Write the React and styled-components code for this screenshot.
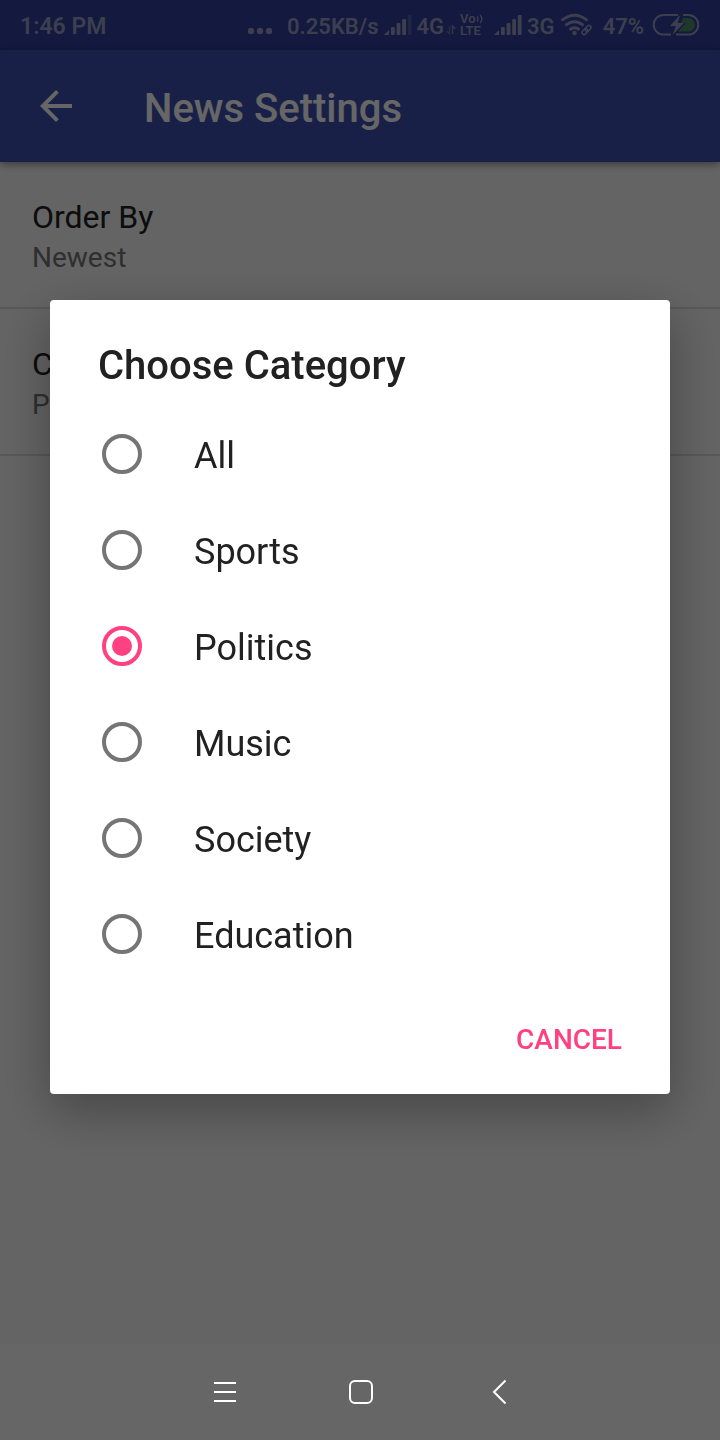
import React, { useState } from "react";
import styled, { createGlobalStyle } from "styled-components";

const GlobalStyle = createGlobalStyle`
  *, *::before, *::after { box-sizing: border-box; }
  body {
    margin: 0;
    background: #fafafa;
    font-family: Roboto, "Liberation Sans", sans-serif;
    color: #212121;
  }
  button, input { font: inherit; margin: 0; }
`;

const Screen = styled.div`
  display: flex;
  flex-direction: column;
  min-height: 100vh;
`;

const StatusBar = styled.div`
  display: flex;
  align-items: center;
  justify-content: space-between;
  height: 50px;
  padding: 0 20px;
  background: #303f9f;
  color: #989dc4;
  font-size: 22px;
  line-height: 28px;
  font-weight: 600;
  white-space: nowrap;

  svg { display: block; flex: none; }
`;

const StatusText = styled.span`
  padding-top: 3px;
`;

const Clock = styled(StatusText)`
  font-size: 23px;
`;

const StatusGroup = styled.div`
  display: flex;
  align-items: center;
  gap: ${(p) => p.$gap}px;
`;

const VolteBadge = styled.span`
  display: flex;
  flex-direction: column;
  align-items: flex-start;
  width: 24px;
  font-size: 13px;
  line-height: 12px;
`;

const VolteTop = styled.span`
  display: flex;
  align-items: center;
`;

const Toolbar = styled.header`
  display: flex;
  align-items: center;
  gap: 56px;
  height: 112px;
  padding: 0 24px;
  background: #3f51b5;
  color: #fff;
  box-shadow: 0 2px 8px rgba(0, 0, 0, 0.45);
`;

const IconButton = styled.button`
  display: flex;
  align-items: center;
  justify-content: center;
  width: 64px;
  height: 64px;
  padding: 0;
  border: 0;
  background: none;
  color: inherit;
  cursor: pointer;
`;

const ToolbarTitle = styled.h1`
  margin: 0;
  padding-top: 6px;
  font-size: 40px;
  line-height: 48px;
  font-weight: 500;
`;

const PreferenceList = styled.main`
  flex: 1;
`;

const Preference = styled.button`
  display: block;
  width: 100%;
  padding: 36px 32px 33px;
  border: 0;
  border-bottom: 2px solid #dadada;
  background: none;
  text-align: left;
  color: #212121;
  cursor: pointer;
`;

const PreferenceTitle = styled.span`
  display: block;
  font-size: 32px;
  line-height: 38px;
`;

const PreferenceSummary = styled.span`
  display: block;
  padding-top: 5px;
  font-size: 28px;
  line-height: 33px;
  color: #757575;
`;

const Scrim = styled.div`
  position: fixed;
  inset: 0;
  display: flex;
  align-items: center;
  justify-content: center;
  padding: 50px 50px 96px;
  background: rgba(0, 0, 0, 0.6);
`;

const Dialog = styled.form`
  width: 100%;
  max-width: 960px;
  border-radius: 4px;
  background: #fff;
  box-shadow: 0 16px 52px rgba(0, 0, 0, 0.32);
`;

const DialogTitle = styled.h2`
  margin: 0;
  padding: 42px 48px 16px;
  font-size: 40px;
  line-height: 48px;
  font-weight: 500;
`;

const Options = styled.div`
  display: flex;
  flex-direction: column;
`;

const Option = styled.label`
  display: flex;
  align-items: center;
  gap: 52px;
  height: 96px;
  padding: 0 52px;
  font-size: 36px;
  line-height: 42px;
  cursor: pointer;
`;

const Radio = styled.input`
  appearance: none;
  flex: none;
  display: grid;
  place-items: center;
  width: 40px;
  height: 40px;
  border: 4px solid #757575;
  border-radius: 50%;

  &:checked { border-color: #ff4081; }
  &:checked::before {
    content: "";
    width: 20px;
    height: 20px;
    border-radius: 50%;
    background: #ff4081;
  }
`;

const OptionText = styled.span`
  padding-top: 3px;
`;

const DialogActions = styled.div`
  display: flex;
  justify-content: flex-end;
  padding: 20px 32px;
`;

const TextButton = styled.button`
  height: 72px;
  padding: 4px 16px 0;
  border: 0;
  background: none;
  color: #ff4081;
  font-size: 28px;
  line-height: 32px;
  font-weight: 500;
  text-transform: uppercase;
  cursor: pointer;
`;

const NavigationBar = styled.nav`
  position: sticky;
  bottom: 0;
  z-index: 1;
  display: flex;
  align-items: center;
  justify-content: center;
  gap: 74px;
  height: 96px;
  background: #666;
  color: #fff;
`;

function Signal({ faded }) {
  const heights = [8, 12, 16, 20];
  return (
    <svg width="28" height="22" viewBox="0 0 28 22" fill="currentColor" aria-hidden="true">
      <path d="M0 21l5-5v5z" />
      {heights.map((h, i) => (
        <rect
          key={h}
          x={7 + i * 5.6}
          y={21 - h}
          width="3.8"
          height={h}
          rx="1"
          opacity={faded && i === 3 ? 0.35 : 1}
        />
      ))}
    </svg>
  );
}

function Dots() {
  return (
    <svg width="26" height="24" viewBox="0 0 26 24" fill="currentColor" aria-hidden="true">
      <circle cx="4" cy="18" r="3.2" />
      <circle cx="13" cy="18" r="3.2" />
      <circle cx="22" cy="18" r="3.2" />
    </svg>
  );
}

function DataArrows() {
  return (
    <svg width="10" height="24" viewBox="0 0 10 24" fill="none" stroke="currentColor" strokeWidth="1.4" aria-hidden="true">
      <path d="M3.5 13v8L.8 18" opacity=".5" />
      <path d="M6.5 21v-8L9.2 16" opacity=".8" />
    </svg>
  );
}

function Waves() {
  return (
    <svg width="7" height="10" viewBox="0 0 7 10" fill="none" stroke="currentColor" strokeWidth="1.3" aria-hidden="true">
      <path d="M1 2.5q2 2.5 0 5M4 .8q3.6 4.2 0 8.4" />
    </svg>
  );
}

function Wifi() {
  return (
    <svg width="33" height="24" viewBox="0 0 33 24" fill="none" stroke="currentColor" aria-hidden="true">
      <path d="M1.5 7.5q13-10.500 26 0M5.500 12.300q9-7 18 0M9.500 16.800q5-4 10 0" strokeWidth="2.800" />
      <circle cx="14.500" cy="20" r="2.300" fill="currentColor" stroke="none" />
      <g strokeWidth="1.500" transform="rotate(-45 26.500 17)">
        <rect x="21" y="15" width="6.500" height="4" rx="2" />
        <rect x="25.500" y="15" width="6.500" height="4" rx="2" />
      </g>
    </svg>
  );
}

function Battery() {
  return (
    <svg width="48" height="24" viewBox="0 0 48 24" fill="none" aria-hidden="true">
      <path d="M31 5h6a6.800 6.800 0 0 1 0 13.500H26l8-8.500h-5z" fill="#4b9068" />
      <path d="M26 2H11.500a9.800 9.800 0 0 0 0 19.600H19M31 2h5.500a9.800 9.800 0 0 1 0 19.600H24" stroke="currentColor" strokeWidth="2" />
      <path d="M28.500 1.500L18 13h6l-3.500 9L32 10h-6.500z" fill="currentColor" />
    </svg>
  );
}

const categories = ["All", "Sports", "Politics", "Music", "Society", "Education"];

export default function App() {
  const [category, setCategory] = useState("Politics");

  return (
    <>
      <GlobalStyle />
      <Screen>
        <StatusBar>
          <Clock>1:46 PM</Clock>
          <StatusGroup $gap={10}>
            <StatusGroup $gap={6}>
              <StatusGroup $gap={14}>
                <Dots />
                <StatusText>0.25KB/s</StatusText>
              </StatusGroup>
              <StatusGroup $gap={4}>
                <Signal faded />
                <StatusGroup $gap={2}>
                  <StatusText>4G</StatusText>
                  <DataArrows />
                </StatusGroup>
                <VolteBadge>
                  <VolteTop>Vo<Waves /></VolteTop>
                  <span>LTE</span>
                </VolteBadge>
              </StatusGroup>
            </StatusGroup>
            <StatusGroup $gap={5}>
              <Signal />
              <StatusText>3G</StatusText>
              <Wifi />
            </StatusGroup>
            <StatusGroup $gap={8}>
              <StatusText>47%</StatusText>
              <Battery />
            </StatusGroup>
          </StatusGroup>
        </StatusBar>
        <Toolbar>
          <IconButton type="button" aria-label="Back">
            <svg width="48" height="48" viewBox="0 0 24 24" fill="currentColor" aria-hidden="true">
              <path d="M20 11H7.830l5.590-5.590L12 4l-8 8 8 8 1.410-1.410L7.830 13H20v-2z" />
            </svg>
          </IconButton>
          <ToolbarTitle>News Settings</ToolbarTitle>
        </Toolbar>
        <PreferenceList>
          <Preference type="button">
            <PreferenceTitle>Order By</PreferenceTitle>
            <PreferenceSummary>Newest</PreferenceSummary>
          </Preference>
          <Preference type="button">
            <PreferenceTitle>Choose Category</PreferenceTitle>
            <PreferenceSummary>{category}</PreferenceSummary>
          </Preference>
        </PreferenceList>
        <NavigationBar aria-label="System">
          <IconButton type="button" aria-label="Recent apps">
            <svg width="32" height="32" viewBox="0 0 32 32" stroke="currentColor" strokeWidth="2" aria-hidden="true">
              <path d="M8 7h22M8 16h22M8 25h22" />
            </svg>
          </IconButton>
          <IconButton type="button" aria-label="Home">
            <svg width="32" height="32" viewBox="0 0 32 32" fill="none" stroke="currentColor" strokeWidth="2" aria-hidden="true">
              <rect x="6" y="5" width="22" height="22" rx="5" />
            </svg>
          </IconButton>
          <IconButton type="button" aria-label="Previous screen">
            <svg width="32" height="32" viewBox="0 0 32 32" fill="none" stroke="currentColor" strokeWidth="2" aria-hidden="true">
              <path d="M23.500 4.500L12 16l11.500 11.500" />
            </svg>
          </IconButton>
        </NavigationBar>
      </Screen>
      <Scrim>
        <Dialog role="dialog" aria-modal="true" aria-labelledby="dialog-title">
          <DialogTitle id="dialog-title">Choose Category</DialogTitle>
          <Options role="radiogroup" aria-labelledby="dialog-title">
            {categories.map((name) => (
              <Option key={name}>
                <Radio
                  type="radio"
                  name="category"
                  value={name}
                  checked={category === name}
                  onChange={() => setCategory(name)}
                />
                <OptionText>{name}</OptionText>
              </Option>
            ))}
          </Options>
          <DialogActions>
            <TextButton type="button">Cancel</TextButton>
          </DialogActions>
        </Dialog>
      </Scrim>
    </>
  );
}
